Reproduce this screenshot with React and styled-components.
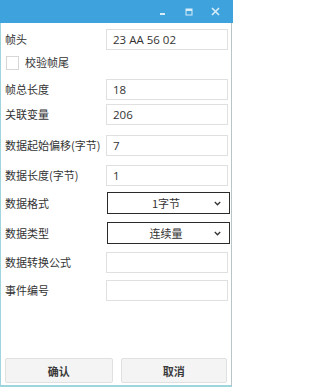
import React from "react";
import styled, { createGlobalStyle } from "styled-components";

const Global = createGlobalStyle`
  html, body { margin: 0; padding: 0; background: #fff; }
  #root { width: 233px; height: 387px; }
  * { box-sizing: border-box; }
`;

const Window = styled.div`
  width: 233px;
  height: 387px;
  display: flex;
  flex-direction: column;
  background: #fff;
  font-family: "Noto Sans CJK SC", "Microsoft YaHei", sans-serif;
  color: #333;
`;

const TitleBar = styled.div`
  height: 23px;
  flex: none;
  background: #3ea3dc;
  display: flex;
  align-items: center;
  justify-content: flex-end;
  padding-right: 5px;
`;

const TitleButton = styled.div`
  width: 26px;
  height: 23px;
  display: flex;
  align-items: center;
  justify-content: center;
`;

const Body = styled.div`
  flex: 1;
  display: flex;
  flex-direction: column;
  border-left: 1px solid #9fd5dc;
  border-right: 1px solid #b8c4c7;
  border-bottom: 2px solid #9fd5dc;
  margin-right: 1px;
  padding: 6px 3px 2px 4px;
`;

const Field = styled.div`
  display: flex;
  align-items: center;
  justify-content: space-between;
  height: ${(p) => p.$h || 21}px;
  margin-top: ${(p) => p.$mt || 0}px;
`;

const Label = styled.span`
  font-size: 11px;
  line-height: 1;
  color: #333;
  white-space: nowrap;
`;

const TextBox = styled.div`
  width: 122px;
  height: 100%;
  border: 1px solid #e0e0e0;
  background: #fff;
  display: flex;
  align-items: center;
  padding-left: 6px;
  font-family: "Open Sans", "Noto Sans CJK SC", sans-serif;
  font-size: 11.5px;
  color: #333;
`;

const Select = styled.div`
  width: 123px;
  height: 100%;
  margin-right: -2px;
  border: 1px solid #2a2a2a;
  background: #fff;
  display: flex;
  align-items: center;
  font-size: 11px;
  color: #333;
`;

const SelectText = styled.span`
  flex: 1;
  text-align: center;
  padding-left: 10px;
`;

const Chevron = styled.svg`
  width: 7px;
  height: 5px;
  margin-right: 8px;
  flex: none;
`;

const CheckRow = styled.label`
  display: flex;
  align-items: center;
  gap: 6px;
  height: ${(p) => p.$h}px;
  margin-top: ${(p) => p.$mt}px;
  padding-left: 1px;
`;

const CheckBox = styled.span`
  width: 13px;
  height: 14px;
  border: 1px solid #d6d6d6;
  background: #fff;
  display: inline-block;
`;

const Footer = styled.div`
  margin-top: auto;
  display: flex;
  gap: 8px;
  padding-right: 1px;
`;

const Button = styled.div`
  width: ${(p) => p.$w}px;
  height: 25px;
  background: #f4f4f4;
  border: 1px solid #e0e0e0;
  border-radius: 2px;
  display: flex;
  align-items: center;
  justify-content: center;
  font-size: 11px;
  font-weight: 700;
  color: #3a3a3a;
`;

const fields = [
  { label: "帧总长度", value: "18", mt: 9 },
  { label: "关联变量", value: "206", mt: 4 },
  { label: "数据起始偏移(字节)", value: "7", mt: 10 },
  { label: "数据长度(字节)", value: "1", mt: 9 },
  { label: "数据格式", select: "1字节", mt: 6, h: 22 },
  { label: "数据类型", select: "连续量", mt: 8, h: 22 },
  { label: "数据转换公式", value: "", mt: 8 },
  { label: "事件编号", value: "", mt: 7 },
];

const iconColor = "#d6ecf8";

export default function App() {
  return (
    <>
      <Global />
      <Window>
        <TitleBar>
          <TitleButton>
            <svg width="8" height="8" viewBox="0 0 8 8">
              <rect x="1" y="5" width="5" height="2" fill={iconColor} />
            </svg>
          </TitleButton>
          <TitleButton>
            <svg width="8" height="8" viewBox="0 0 8 8">
              <rect x="1" y="1" width="6" height="6" fill="none" stroke={iconColor} strokeWidth="1" />
              <rect x="1" y="1" width="6" height="2" fill={iconColor} />
            </svg>
          </TitleButton>
          <TitleButton>
            <svg width="9" height="9" viewBox="0 0 9 9">
              <path d="M1 1 L8 8 M8 1 L1 8" stroke={iconColor} strokeWidth="1.6" />
            </svg>
          </TitleButton>
        </TitleBar>
        <Body>
          <Field>
            <Label>帧头</Label>
            <TextBox>23 AA 56 02</TextBox>
          </Field>
          <CheckRow $h={15} $mt={5}>
            <CheckBox />
            <Label>校验帧尾</Label>
          </CheckRow>
          {fields.map((f) => (
            <Field key={f.label} $mt={f.mt} $h={f.h}>
              <Label>{f.label}</Label>
              {f.select ? (
                <Select>
                  <SelectText>{f.select}</SelectText>
                  <Chevron viewBox="0 0 7 5">
                    <path d="M0.8 1 L3.5 3.8 L6.2 1" fill="none" stroke="#333" strokeWidth="1.3" />
                  </Chevron>
                </Select>
              ) : (
                <TextBox>{f.value}</TextBox>
              )}
            </Field>
          ))}
          <Footer>
            <Button $w={108}>确认</Button>
            <Button $w={107}>取消</Button>
          </Footer>
        </Body>
      </Window>
    </>
  );
}
